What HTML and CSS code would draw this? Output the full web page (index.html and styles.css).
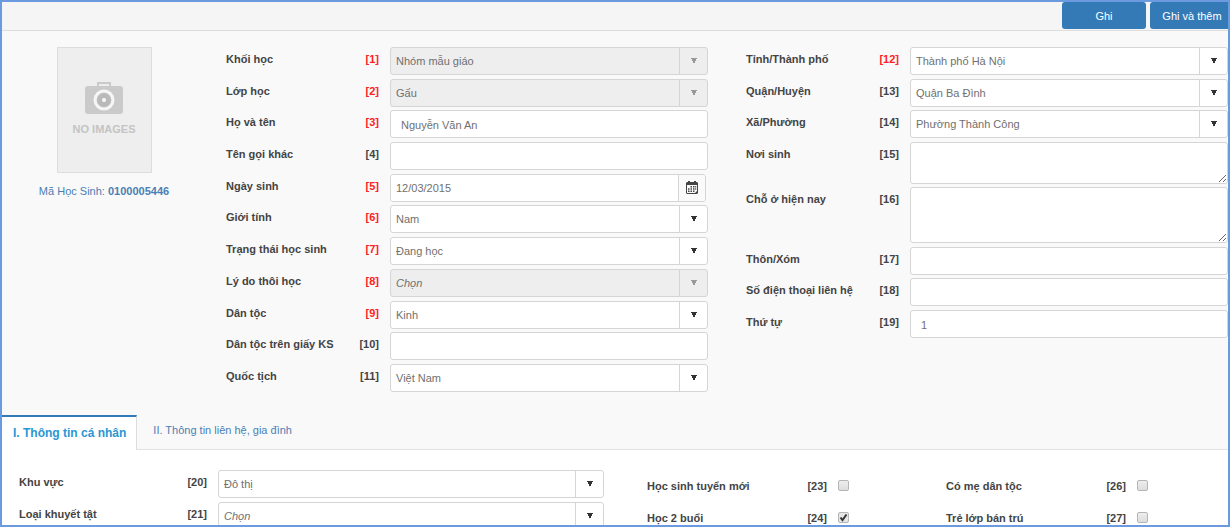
FILE: index.html
```html
<!DOCTYPE html>
<html lang="vi">
<head>
<meta charset="utf-8">
<title>Hồ sơ học sinh</title>
<link rel="stylesheet" href="styles.css">
</head>
<body>
<div class="frame">
  <header class="toolbar">
    <button class="btn" type="button">Ghi</button>
    <button class="btn btn-last" type="button">Ghi và thêm</button>
  </header>

  <main class="profile">
    <aside class="photo-col">
      <div class="photo">
        <svg class="camera" viewBox="0 0 38 34" aria-hidden="true">
          <path fill="#cacaca" fill-rule="evenodd" d="M12 1h14v4h9a3 3 0 0 1 3 3v22a3 3 0 0 1-3 3H3a3 3 0 0 1-3-3V8a3 3 0 0 1 3-3h9zM14 3v2h10V3z"/>
          <circle cx="19" cy="19" r="9" fill="none" stroke="#f6f6f6" stroke-width="3"/>
          <circle cx="19" cy="19" r="4.500" fill="none" stroke="#b9b9b9" stroke-width="4.500"/>
          <circle cx="19" cy="19" r="2" fill="#f6f6f6"/>
        </svg>
        <span class="photo-text">NO IMAGES</span>
      </div>
      <p class="code">Mã Học Sinh: <b>0100005446</b></p>
    </aside>

    <section class="fields fields-left">
      <div class="field"><label class="name" for="f1">Khối học</label><span class="num req">[1]</span><span class="pick off"><select id="f1" disabled><option>Nhóm mẫu giáo</option></select></span></div>
      <div class="field"><label class="name" for="f2">Lớp học</label><span class="num req">[2]</span><span class="pick off"><select id="f2" disabled><option>Gấu</option></select></span></div>
      <div class="field"><label class="name" for="f3">Họ và tên</label><span class="num req">[3]</span><input class="box" id="f3" type="text" value="Nguyễn Văn An"></div>
      <div class="field"><label class="name" for="f4">Tên gọi khác</label><span class="num">[4]</span><input class="box" id="f4" type="text"></div>
      <div class="field"><label class="name" for="f5">Ngày sinh</label><span class="num req">[5]</span>
        <div class="date"><input class="date-input" id="f5" type="text" value="12/03/2015"><button class="date-btn" type="button" aria-label="Chọn ngày">
          <svg viewBox="0 0 12 13" width="12" height="13" aria-hidden="true"><path fill="#444" fill-rule="evenodd" d="M2 0h2v1h4V0h2v1h1l1 1v10l-1 1H1l-1-1V2l1-1h1zM1 4v8h8l2-2V4z"/><path fill="#444" d="M4.500 5h1.500v1.500H4.500zM7 5h1.500v1.500H7zM2 7.200h1.500v1.500H2zM4.500 7.200h1.500v1.500H4.500zM7 7.200h1.500v1.500H7zM2 9.400h1.500v1.500H2zM4.500 9.400h1.500v1.500H4.500zM7 9.400h1.500v1.500H7zM9.200 5h1v1.500h-1zM9.200 7.200h1v1.500h-1z"/></svg>
        </button></div>
      </div>
      <div class="field"><label class="name" for="f6">Giới tính</label><span class="num req">[6]</span><span class="pick"><select id="f6"><option>Nam</option><option>Nữ</option></select></span></div>
      <div class="field"><label class="name" for="f7">Trạng thái học sinh</label><span class="num req">[7]</span><span class="pick"><select id="f7"><option>Đang học</option></select></span></div>
      <div class="field"><label class="name" for="f8">Lý do thôi học</label><span class="num req">[8]</span><span class="pick off empty"><select id="f8" disabled><option>Chọn</option></select></span></div>
      <div class="field"><label class="name" for="f9">Dân tộc</label><span class="num req">[9]</span><span class="pick"><select id="f9"><option>Kinh</option></select></span></div>
      <div class="field"><label class="name" for="f10">Dân tộc trên giấy KS</label><span class="num">[10]</span><input class="box" id="f10" type="text"></div>
      <div class="field"><label class="name" for="f11">Quốc tịch</label><span class="num">[11]</span><span class="pick"><select id="f11"><option>Việt Nam</option></select></span></div>
    </section>

    <section class="fields fields-right">
      <div class="field"><label class="name" for="f12">Tỉnh/Thành phố</label><span class="num req">[12]</span><span class="pick"><select id="f12"><option>Thành phố Hà Nội</option></select></span></div>
      <div class="field"><label class="name" for="f13">Quận/Huyện</label><span class="num">[13]</span><span class="pick"><select id="f13"><option>Quận Ba Đình</option></select></span></div>
      <div class="field"><label class="name" for="f14">Xã/Phường</label><span class="num">[14]</span><span class="pick"><select id="f14"><option>Phường Thành Công</option></select></span></div>
      <div class="field"><label class="name" for="f15">Nơi sinh</label><span class="num">[15]</span><textarea class="box area" id="f15"></textarea></div>
      <div class="field"><label class="name" for="f16">Chỗ ở hiện nay</label><span class="num">[16]</span><textarea class="box area area-tall" id="f16"></textarea></div>
      <div class="field"><label class="name" for="f17">Thôn/Xóm</label><span class="num">[17]</span><input class="box" id="f17" type="text"></div>
      <div class="field"><label class="name" for="f18">Số điện thoại liên hệ</label><span class="num">[18]</span><input class="box" id="f18" type="text"></div>
      <div class="field"><label class="name" for="f19">Thứ tự</label><span class="num">[19]</span><input class="box" id="f19" type="text" value="1"></div>
    </section>
  </main>

  <nav class="tabs">
    <a class="tab active" href="#ca-nhan">I. Thông tin cá nhân</a>
    <a class="tab" href="#lien-he">II. Thông tin liên hệ, gia đình</a>
  </nav>

  <section class="details" id="ca-nhan">
    <div class="stack">
      <div class="field wide"><label class="name" for="f20">Khu vực</label><span class="num">[20]</span><span class="pick"><select id="f20"><option>Đô thị</option></select></span></div>
      <div class="field wide"><label class="name" for="f21">Loại khuyết tật</label><span class="num">[21]</span><span class="pick empty"><select id="f21"><option>Chọn</option></select></span></div>
    </div>
    <div class="stack checks">
      <div class="check-row"><label class="name" for="f23">Học sinh tuyển mới</label><span class="num">[23]</span><input class="check" id="f23" type="checkbox"></div>
      <div class="check-row"><label class="name" for="f24">Học 2 buổi</label><span class="num">[24]</span><input class="check" id="f24" type="checkbox" checked></div>
    </div>
    <div class="stack checks">
      <div class="check-row"><label class="name" for="f26">Có mẹ dân tộc</label><span class="num">[26]</span><input class="check" id="f26" type="checkbox"></div>
      <div class="check-row"><label class="name" for="f27">Trẻ lớp bán trú</label><span class="num">[27]</span><input class="check" id="f27" type="checkbox"></div>
    </div>
  </section>
</div>
</body>
</html>
```

FILE: styles.css
```css
* { box-sizing: border-box; }

body {
  margin: 0;
  font: 12px/16px "Liberation Sans", Arial, sans-serif;
  color: #444;
  background: #fff;
}

input, select, textarea, button { font: inherit; color: inherit; margin: 0; }

.frame {
  height: 100vh;
  overflow: hidden;
  display: flex;
  flex-direction: column;
  border: 2px solid #6b9ae0;
  background: #f9f9f9;
}

.frame > * { flex-shrink: 0; }

/* Toolbar */
.toolbar {
  display: flex;
  justify-content: flex-end;
  gap: 4px;
  padding-bottom: 1px;
  background: #f5f5f5;
  border-bottom: 1px solid #ddd;
}

.btn {
  width: 84px;
  height: 27px;
  padding: 0;
  border: 0;
  border-radius: 3px;
  background: #337ab7;
  color: #fff;
  font-size: 11px;
}

.btn-last { width: 78px; padding-left: 6px; border-radius: 3px 0 0 3px; }

/* Student profile */
.profile {
  display: grid;
  grid-template-columns: 186px 1fr 1fr;
  column-gap: 38px;
  align-items: start;
  padding: 16px 0 23px;
}

.photo-col {
  display: flex;
  flex-direction: column;
  align-items: center;
  padding-left: 18px;
}

.photo {
  width: 95px;
  height: 126px;
  display: flex;
  flex-direction: column;
  align-items: center;
  gap: 6px;
  padding-top: 33px;
  border: 1px solid #ddd;
  background: #eee;
}

.camera { width: 38px; height: 34px; }
.photo-text { color: #c4c4c4; font-weight: bold; font-size: 11px; }

.code { margin: 10px 0 0; color: #4a7fb5; font-size: 11px; white-space: nowrap; }

.fields {
  display: flex;
  flex-direction: column;
  justify-content: space-between;
}

.fields-left { min-height: 345px; }
.fields-right { min-height: 291px; }

.field {
  display: grid;
  grid-template-columns: 1fr auto 318px;
  align-items: start;
}

.name, .num { padding-top: 4px; font-weight: bold; font-size: 11px; white-space: nowrap; }
.num { padding-right: 11px; }
.req { color: #f22; }

.box {
  display: block;
  width: 100%;
  height: 28px;
  padding: 2px 10px 0;
  border: 1px solid #d5d5d5;
  border-radius: 3px;
  background: #fff;
  color: #707070;
  font-size: 11px;
}

.area { height: 42px; resize: vertical; }
.area-tall { height: 56px; }

/* Drop-down: the arrow cell sits at the right end of the select */
.pick {
  display: grid;
  grid-template-columns: 1fr 28px;
  height: 28px;
  border: 1px solid #d5d5d5;
  border-radius: 3px;
  background: #fff;
  color: #707070;
  overflow: hidden;
}

.pick select {
  grid-area: 1 / 1 / 2 / 3;
  appearance: none;
  width: 100%;
  padding: 0 32px 0 5px;
  border: 0;
  background: none;
  color: inherit;
  font-size: 11px;
  opacity: 1;
}

.pick::after {
  content: "";
  grid-area: 1 / 2;
  pointer-events: none;
  border-left: 1px solid #d5d5d5;
  background: conic-gradient(from -28deg at 50% 100%, #333 56deg, transparent 0) 50% 50% / 6px 6px no-repeat;
}

.off { background: #eee; }
.off::after { background-image: conic-gradient(from -28deg at 50% 100%, #999 56deg, transparent 0); }
.empty select { font-style: italic; }

.date {
  display: flex;
  height: 28px;
  margin-right: 2px;
  border: 1px solid #d5d5d5;
  border-radius: 3px;
  overflow: hidden;
  background: #fff;
}

.date-input { flex: 1; min-width: 0; padding: 1px 5px 0; border: 0; color: #707070; font-size: 11px; }

.date-btn {
  display: grid;
  place-items: center;
  width: 27px;
  padding: 0;
  border: 0;
  border-left: 1px solid #d5d5d5;
  background: #fafafa;
}

/* Tabs */
.tabs {
  display: flex;
  border-bottom: 1px solid #e2e2e2;
}

.tab {
  padding: 7px 16px 10px;
  color: #4a7fb5;
  font-size: 11px;
  text-decoration: none;
  white-space: nowrap;
}

.active {
  margin-bottom: -1px;
  padding: 8px 10px 9px 11px;
  border-top: 2px solid #337ab7;
  border-right: 1px solid #ddd;
  background: #fff;
  color: #2a96d4;
  font-size: 12px;
  font-weight: bold;
}

/* Details under the active tab */
.details {
  display: grid;
  grid-template-columns: 585px 1fr 1fr;
  column-gap: 43px;
  flex: 1 0 auto;
  padding: 20px 26px 0 17px;
  background: #fff;
}

.stack { display: flex; flex-direction: column; gap: 4px; }
.wide { grid-template-columns: 1fr auto 386px; }

.checks { padding-top: 4px; }
.check-row { display: grid; grid-template-columns: 1fr auto 65px; min-height: 28px; }

.check {
  appearance: none;
  width: 11px;
  height: 11px;
  margin-top: 6px;
  border: 1px solid #b5b5b5;
  border-radius: 2px;
  background: linear-gradient(#eee, #ddd);
}

.check:checked {
  background: url("data:image/svg+xml,%3Csvg xmlns='http://www.w3.org/2000/svg' viewBox='0 0 9 9'%3E%3Cpath d='M1.500 4.500l2 2.500 4-5.500' fill='none' stroke='%23333' stroke-width='2'/%3E%3C/svg%3E") #e6e6e6;
}
```
